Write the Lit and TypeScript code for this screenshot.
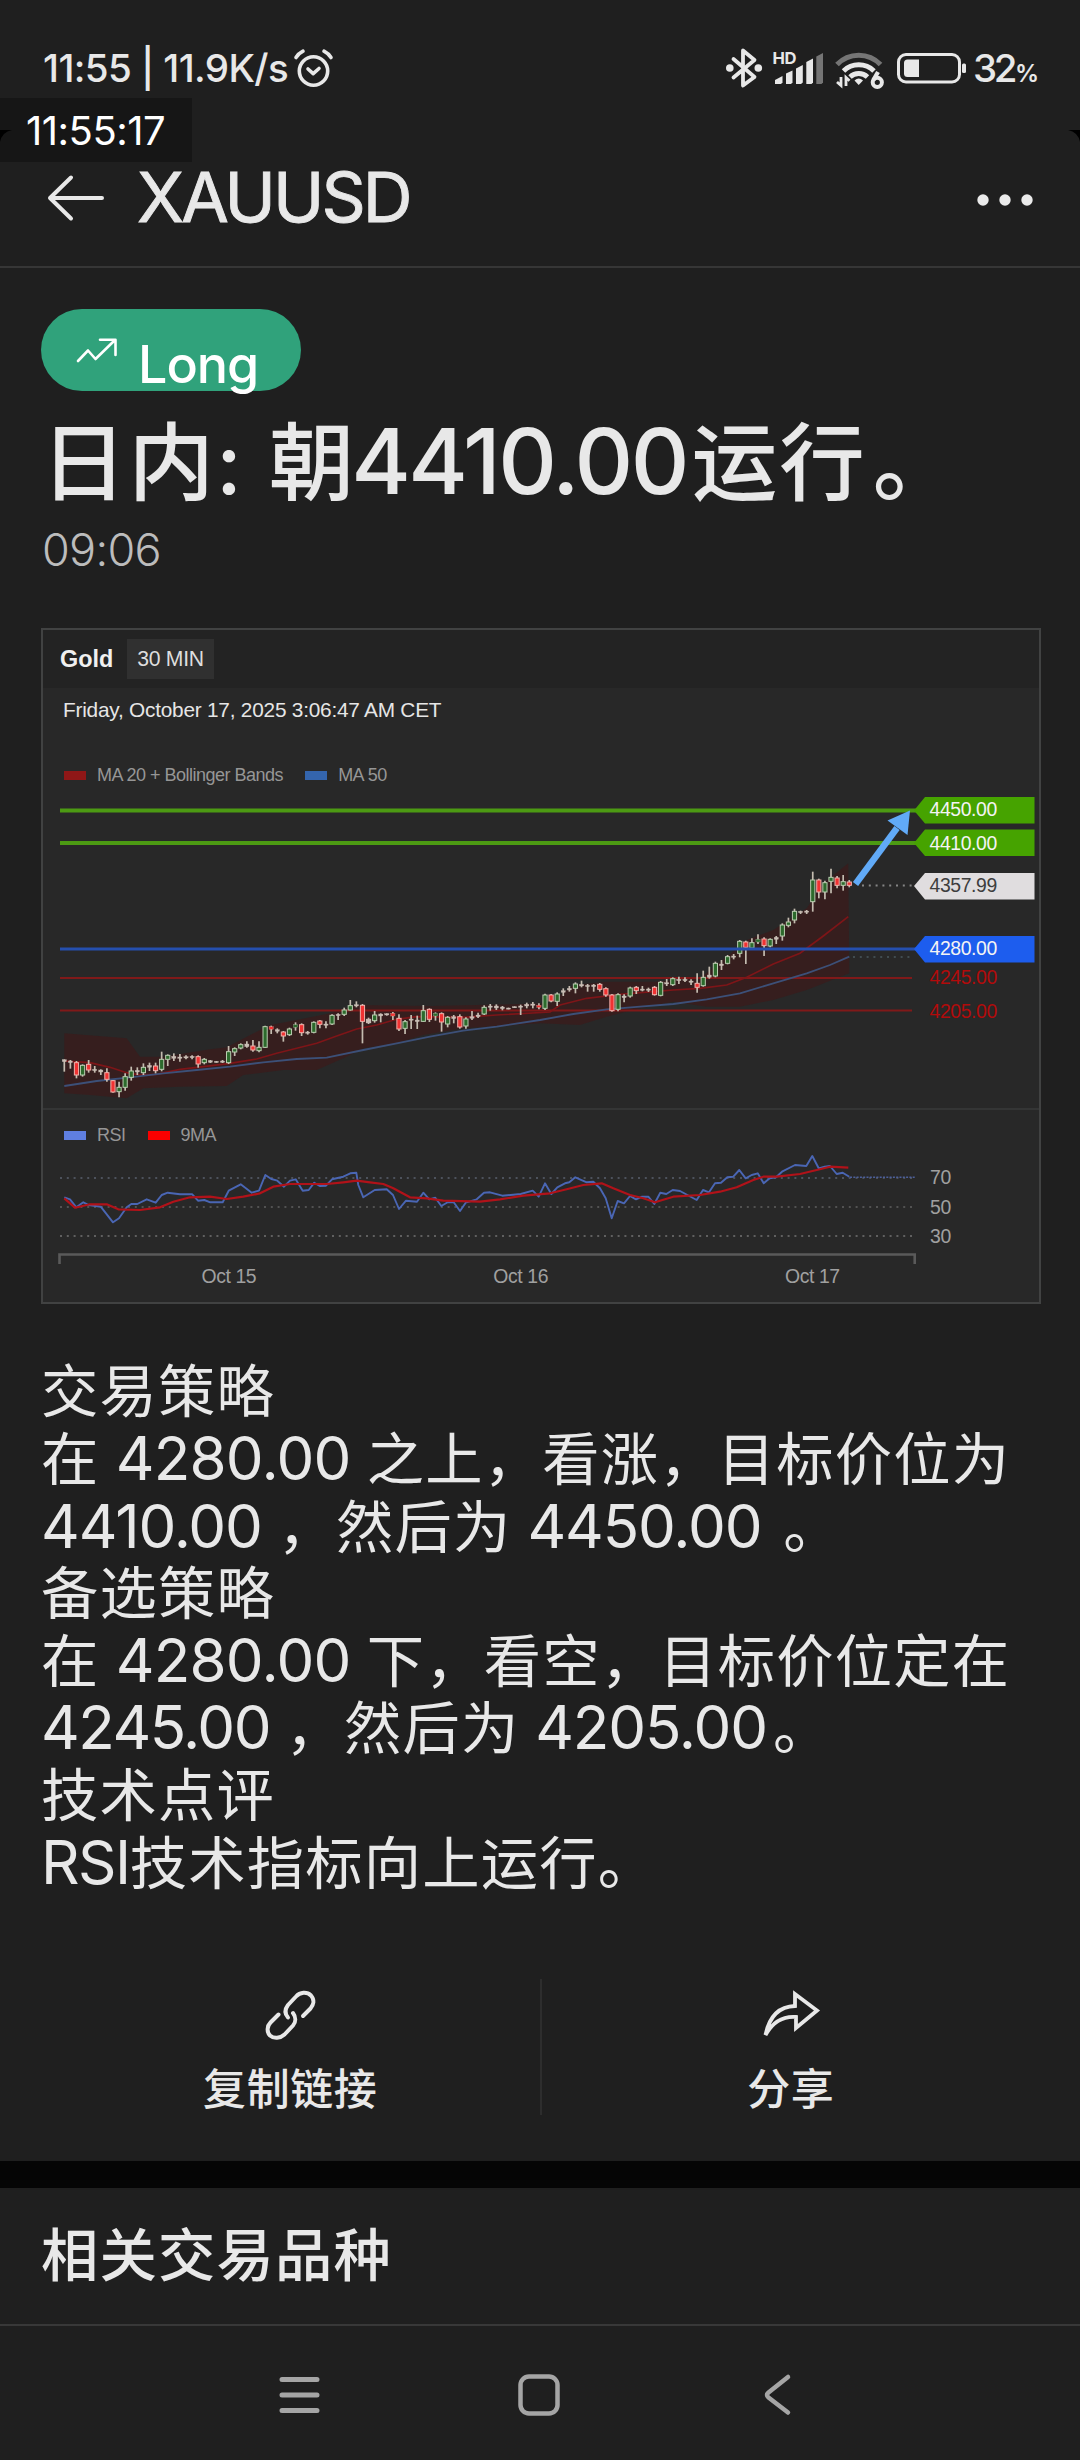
import { LitElement, html, svg, css } from "lit";
import { customElement } from "lit/decorators.js";

type Kind = "g" | "r" | "w";
type Candle = [number, number, number, number, Kind];

// high, body top, body bottom, low in thirds of a pixel below the plot origin
const CANDLES: Candle[] = [
  [298, 299, 305, 335, "w"], [300, 303, 308, 326, "w"], [303, 308, 345, 355, "r"], [313, 316, 345, 350, "g"],
  [300, 313, 330, 338, "r"], [318, 328, 332, 338, "w"], [328, 330, 336, 345, "w"], [325, 338, 358, 365, "r"],
  [360, 362, 396, 398, "r"], [365, 382, 395, 412, "g"], [340, 350, 382, 392, "g"], [320, 333, 352, 362, "g"],
  [322, 331, 336, 345, "w"], [310, 322, 338, 345, "g"], [308, 316, 322, 333, "w"], [308, 318, 332, 340, "r"],
  [275, 298, 328, 334, "g"], [283, 286, 298, 318, "g"], [280, 289, 295, 303, "w"], [282, 291, 295, 305, "w"],
  [286, 290, 294, 298, "w"], [286, 289, 293, 298, "w"], [286, 290, 312, 323, "r"], [294, 298, 308, 313, "g"],
  [300, 302, 307, 309, "w"], [303, 304, 307, 308, "w"], [300, 303, 307, 309, "w"], [258, 275, 308, 312, "g"],
  [262, 266, 276, 288, "g"], [250, 254, 264, 268, "g"], [244, 252, 260, 263, "w"], [240, 258, 270, 275, "r"],
  [244, 262, 272, 277, "g"], [197, 200, 262, 264, "g"], [197, 200, 208, 222, "r"], [205, 209, 214, 220, "w"],
  [213, 216, 228, 245, "r"], [203, 207, 224, 228, "g"], [187, 194, 202, 212, "g"], [190, 194, 218, 228, "r"],
  [213, 216, 220, 224, "w"], [184, 187, 217, 220, "g"], [180, 183, 193, 205, "r"], [184, 192, 196, 205, "w"],
  [163, 166, 192, 195, "g"], [160, 163, 167, 180, "w"], [143, 150, 163, 168, "g"], [120, 137, 150, 152, "g"],
  [124, 134, 138, 142, "w"], [132, 136, 184, 250, "r"], [173, 178, 188, 192, "w"], [153, 165, 182, 188, "g"],
  [160, 162, 168, 187, "w"], [160, 161, 165, 167, "w"], [156, 160, 168, 180, "r"], [163, 175, 207, 213, "r"],
  [180, 185, 205, 222, "g"], [165, 177, 181, 207, "w"], [167, 180, 185, 207, "w"], [135, 152, 184, 186, "g"],
  [145, 148, 178, 186, "r"], [157, 160, 168, 182, "g"], [157, 161, 186, 215, "r"], [168, 172, 192, 202, "g"],
  [165, 170, 176, 190, "w"], [163, 170, 201, 206, "r"], [172, 177, 198, 206, "g"], [153, 170, 175, 180, "w"],
  [158, 165, 170, 174, "w"], [136, 142, 162, 165, "g"], [132, 138, 142, 152, "w"], [133, 138, 144, 150, "w"],
  [138, 141, 146, 151, "w"], [143, 144, 147, 148, "w"], [139, 140, 143, 144, "w"], [134, 138, 142, 165, "w"],
  [128, 133, 138, 145, "w"], [126, 132, 136, 145, "w"], [130, 136, 142, 148, "r"], [101, 105, 145, 150, "g"],
  [102, 105, 123, 127, "r"], [97, 102, 124, 138, "g"], [85, 92, 97, 108, "w"], [78, 85, 90, 95, "w"],
  [67, 72, 85, 100, "g"], [62, 73, 78, 82, "w"], [72, 76, 80, 95, "w"], [72, 75, 80, 95, "w"],
  [69, 73, 88, 95, "r"], [82, 86, 105, 110, "r"], [102, 105, 152, 155, "r"], [100, 104, 148, 154, "g"],
  [103, 108, 113, 127, "w"], [80, 84, 108, 113, "g"], [78, 82, 92, 102, "r"], [78, 87, 91, 94, "w"],
  [83, 87, 91, 96, "w"], [78, 82, 104, 107, "r"], [63, 67, 106, 109, "g"], [57, 68, 72, 78, "w"],
  [52, 56, 74, 78, "g"], [50, 58, 62, 72, "w"], [52, 58, 62, 66, "w"], [58, 63, 67, 75, "w"],
  [40, 70, 82, 98, "r"], [32, 52, 77, 80, "g"], [20, 45, 52, 56, "w"], [5, 10, 48, 52, "g"],
  [0, 12, 17, 30, "w"], [-15, -10, 10, 13, "g"], [-18, -12, -8, -2, "w"], [-60, -56, -20, -8, "g"],
  [-58, -54, -38, 12, "r"], [-65, -52, -36, -32, "g"], [-77, -62, -54, -48, "g"], [-68, -63, -43, -12, "r"],
  [-65, -62, -42, -38, "g"], [-72, -68, -62, -48, "w"], [-110, -105, -72, -58, "g"], [-127, -114, -104, -98, "g"],
  [-154, -146, -120, -110, "g"], [-148, -146, -142, -138, "w"], [-150, -147, -143, -138, "w"], [-265, -240, -175, -145, "g"],
  [-244, -240, -204, -185, "r"], [-238, -232, -204, -182, "g"], [-274, -248, -236, -200, "g"], [-252, -246, -224, -215, "r"],
  [-255, -235, -224, -208, "g"], [-240, -234, -224, -218, "r"],
];

const px = (x: number) => 30 + x / 3;
const py = (y: number) => 960 + y / 3;
const line = (flat: number[], dx = 0, dy = 0) => {
  const out: string[] = [];
  for (let i = 0; i < flat.length; i += 2) {
    out.push(`${px(flat[i] + dx).toFixed(1)},${py(flat[i + 1] + dy).toFixed(1)}`);
  }
  return out.join(" ");
};

const MA20 =
  line([103, 303, 180, 308, 240, 322, 290, 338, 330, 345, 380, 343, 450, 328, 520, 320, 600, 310, 680, 297, 740, 280, 800, 265, 860, 250, 920, 228, 980, 207, 1040, 195, 1100, 178, 1160, 170, 1300, 172, 1400, 165, 1560, 156]) +
  " " +
  line([60, 795, 140, 775, 250, 762, 340, 755, 400, 750, 480, 745, 560, 735, 620, 712, 700, 672, 780, 640, 850, 588, 925, 530], 1530, -660);
const MA50 =
  line([103, 378, 200, 363, 300, 352, 400, 340, 500, 330, 600, 320, 700, 307, 800, 297, 890, 293, 1000, 270, 1100, 250, 1200, 230, 1300, 212, 1400, 200]) +
  " " +
  line([0, 840, 100, 822, 200, 808, 300, 800, 400, 792, 500, 778, 600, 760, 700, 730, 800, 700, 870, 675, 928, 650], 1530, -660);
const BAND =
  line([103, 220, 290, 235, 330, 290, 400, 290, 540, 268, 590, 262, 680, 215, 720, 195, 800, 180, 900, 160, 980, 135, 1200, 138, 1560, 130]) +
  " " +
  line([100, 735, 200, 725, 340, 725, 480, 715, 560, 650, 620, 600, 700, 570, 800, 505, 850, 430, 925, 370, 928, 700, 800, 750, 700, 780, 600, 800, 500, 800, 400, 785, 300, 805, 200, 830, 120, 855, 0, 850], 1530, -660) +
  " " +
  line([1300, 205, 1180, 225, 1100, 250, 1000, 265, 950, 290, 860, 330, 760, 330, 640, 345, 590, 378, 450, 380, 340, 385, 290, 415, 180, 405, 103, 400]);
const RSI =
  line([103, 712, 120, 718, 139, 742, 160, 727, 176, 735, 212, 740, 249, 787, 267, 775, 290, 742, 304, 732, 322, 732, 350, 718, 377, 728, 395, 705, 413, 698, 450, 703, 487, 703, 504, 722, 523, 720, 541, 727, 578, 727, 596, 692, 632, 673, 665, 698, 687, 692, 706, 645, 724, 657, 742, 662, 762, 680, 780, 662, 797, 658, 818, 692, 836, 690, 853, 668, 869, 678, 888, 677, 906, 658, 940, 650, 961, 640, 979, 638, 985, 675, 1000, 712, 1034, 690, 1070, 688, 1089, 705, 1107, 747, 1128, 722, 1161, 725, 1180, 698, 1198, 718, 1216, 713, 1234, 738, 1253, 727, 1271, 727, 1290, 753, 1307, 728, 1340, 718, 1362, 698, 1380, 697, 1417, 707, 1472, 702, 1508, 692, 1526, 710]) +
  " " +
  line([15, 430, 34, 462, 52, 442, 75, 430, 88, 427, 106, 412, 140, 427, 160, 425, 180, 445, 197, 475, 215, 535, 233, 483, 252, 490, 270, 468, 288, 478, 306, 470, 325, 470, 343, 492, 361, 458, 379, 462, 398, 450, 420, 453, 470, 480, 489, 450, 507, 457, 525, 430, 543, 428, 562, 412, 580, 410, 598, 390, 617, 415, 635, 405, 653, 400, 671, 430, 689, 415, 708, 412, 726, 395, 765, 375, 799, 378, 817, 348, 836, 385, 854, 380, 870, 378, 890, 402, 908, 398, 928, 410], 1530, 240);
const RSI_MA =
  line([103, 715, 135, 743, 180, 733, 230, 733, 265, 748, 330, 750, 390, 742, 430, 725, 480, 712, 540, 710, 590, 717, 640, 710, 690, 700, 730, 680, 780, 672, 850, 672, 890, 672, 940, 667, 980, 662, 1020, 667, 1060, 672, 1090, 685, 1140, 712, 1190, 715, 1240, 722, 1350, 725, 1410, 718, 1480, 707]) +
  " " +
  line([30, 460, 80, 448, 130, 435, 185, 430, 220, 445, 270, 465, 310, 475, 345, 487, 400, 470, 480, 465, 540, 455, 590, 442, 640, 420, 670, 410, 710, 410, 780, 402, 830, 390, 870, 380, 925, 383], 1530, 240);

@customElement("price-chart")
export class PriceChart extends LitElement {
  static styles = css`
    :host {
      display: flex;
      flex-direction: column;
      box-sizing: border-box;
      width: 1000px;
      height: 676px;
      border: 2px solid #414242;
      background: #282828;
      color: #e6e6e6;
      font-family: "Liberation Sans", sans-serif;
      overflow: hidden;
    }
    .head {
      display: flex;
      align-items: center;
      gap: 14px;
      height: 58px;
      padding-left: 17px;
      background: #232323;
      flex: none;
    }
    .name { font-size: 23.4px; font-weight: 700; color: #f0f0f0; }
    .frame {
      display: flex;
      align-items: center;
      height: 40px;
      padding: 0 10px;
      background: #303030;
      font-size: 21.2px;
      letter-spacing: -0.3px;
      line-height: 36px;
      color: #dedede;
    }
    .date { flex: none; padding: 10px 0 0 20px; font-size: 20.8px; letter-spacing: -0.22px; line-height: 24px; }
    .legend {
      display: flex;
      align-items: center;
      flex: none;
      padding-left: 21px;
      font-size: 18px;
      letter-spacing: -0.5px;
      line-height: 20px;
      color: #969696;
    }
    .main { padding-top: 43px; }
    .swatch { width: 22px; height: 9px; margin-right: 11px; }
    .item { margin-right: 22px; }
    .s1 { background: #8f1717; }
    .s2 { background: #3465ad; }
    .s3 { background: #5f7fe0; }
    .s4 { background: #fa0000; }
    svg { display: block; flex: none; }
    .rsi { margin-top: -4px; }
    text { font-size: 19.4px; letter-spacing: -0.4px; }
    .ax { fill: #a0a0a0; }
    .w { fill: #f4f4f4; }
    .d { fill: #3e3e3e; }
    .r { fill: #b10b0b; }
  `;

  private candle([hi, top, bottom, lo, kind]: Candle, i: number) {
    const x = 64.3 + i * 6.085;
    const edge = kind === "g" ? "#b9cdb0" : kind === "r" ? "#f0b0aa" : "#c9beb5";
    const fill = kind === "g" ? "#2c6a2c" : kind === "r" ? "#f03232" : "#c9beb5";
    const h = (bottom - top) / 3;
    const small = h < 3;
    return svg`
      <line x1=${x} x2=${x} y1=${py(hi)} y2=${py(lo)} stroke="#c4bcb0" stroke-width="1.7"></line>
      <rect x=${x - 2.1} y=${py(top)} width="4.2" height=${Math.max(h, 1.2)}
        fill=${fill} stroke=${edge} stroke-width=${small ? 0.3 : 1}></rect>`;
  }

  private tag(y: number, top: number, color: string, cls: string, text: string, base: number) {
    return svg`
      <path d="M914,${y} L925,${top} H1034.5 V${top + 26.5} H925Z" fill=${color}></path>
      <text class=${cls} x="929.5" y=${base}>${text}</text>`;
  }

  render() {
    const guide = (y: number, x1: number, x2: number, c: string) =>
      svg`<line x1=${x1} x2=${x2} y1=${y} y2=${y} stroke=${c} stroke-width="2" stroke-dasharray="2 4.8"></line>`;
    return html`
      <div class="head"><span class="name">Gold</span><span class="frame">30 MIN</span></div>
      <div class="date">Friday, October 17, 2025 3:06:47 AM CET</div>
      <div class="legend main">
        <span class="swatch s1"></span><span class="item">MA 20 + Bollinger Bands</span>
        <span class="swatch s2"></span><span class="item">MA 50</span>
      </div>
      <svg width="996" height="320" viewBox="43 785 996 320">
        <polygon points=${BAND} fill="#500f0f" fill-opacity=".36"></polygon>
        <g stroke="#4c9a13" stroke-width="4">
          <line x1="60" x2="918" y1="810.5" y2="810.5"></line>
          <line x1="60" x2="918" y1="843" y2="843"></line>
        </g>
        <g stroke="#801919" stroke-width="2.2">
          <line x1="60" x2="912" y1="978" y2="978"></line>
          <line x1="60" x2="912" y1="1010.5" y2="1010.5"></line>
        </g>
        ${guide(957, 853, 914, "#414c50")} ${guide(885.5, 862, 914, "#858585")}
        <polyline points=${MA20} fill="none" stroke="#7e1518" stroke-width="1.7"></polyline>
        <polyline points=${MA50} fill="none" stroke="#3c5078" stroke-width="1.8"></polyline>
        ${CANDLES.map((c, i) => this.candle(c, i))}
        <line x1="60" x2="918" y1="949" y2="949" stroke="#254fae" stroke-width="3"></line>
        <line x1="855.5" y1="884" x2="897" y2="828" stroke="#61aaf7" stroke-width="6.5"></line>
        <path d="M910,810.5 L887.5,820.5 L907.5,835Z" fill="#61aaf7"></path>
        ${this.tag(810.5, 797, "#46a300", "w", "4450.00", 816)}
        ${this.tag(843, 829.5, "#46a300", "w", "4410.00", 850)}
        ${this.tag(886, 873, "#e0dddf", "d", "4357.99", 892)}
        ${this.tag(949, 936, "#1d5dee", "w", "4280.00", 955)}
        <text class="r" x="929.5" y="983.5">4245.00</text>
        <text class="r" x="929.5" y="1017.5">4205.00</text>
      </svg>
      <svg width="996" height="20" viewBox="43 1105 996 20">
        <line x1="43" x2="1039" y1="1109" y2="1109" stroke="#343535" stroke-width="2"></line>
      </svg>
      <div class="legend">
        <span class="swatch s3"></span><span class="item">RSI</span>
        <span class="swatch s4"></span><span class="item">9MA</span>
      </div>
      <svg class="rsi" width="996" height="160" viewBox="43 1141 996 160">
        ${guide(1178, 60, 915, "#4d525c")} ${guide(1207, 60, 915, "#525252")} ${guide(1236, 60, 915, "#606060")}
        <line x1="850" x2="915" y1="1177.3" y2="1177.3" stroke="#4c5f9a" stroke-width="1.6" stroke-dasharray="2 1.3"></line>
        <polyline points=${RSI} fill="none" stroke="#4a66b4" stroke-width="1.9" stroke-linejoin="round"></polyline>
        <polyline points=${RSI_MA} fill="none" stroke="#b11219" stroke-width="2.2" stroke-linejoin="round"></polyline>
        <path d="M59.5,1264 V1254.5 H914.7 V1264" fill="none" stroke="#5a5a5a" stroke-width="2.6"></path>
        <text class="ax" x="930" y="1183.5">70</text>
        <text class="ax" x="930" y="1213.5">50</text>
        <text class="ax" x="930" y="1242.5">30</text>
        <text class="ax" x="201.5" y="1283">Oct 15</text>
        <text class="ax" x="493.3" y="1283">Oct 16</text>
        <text class="ax" x="785" y="1283">Oct 17</text>
      </svg>
    `;
  }
}

@customElement("app-root")
export class AppRoot extends LitElement {
  static styles = css`
    :host {
      display: flex;
      flex-direction: column;
      position: relative;
      width: 1080px;
      height: 2460px;
      overflow: hidden;
      background: #1f1f1f;
      color: #e8e8e8;
      font-family: Inter, "Noto Sans CJK SC", sans-serif;
    }
    * { box-sizing: border-box; }
    svg { display: block; flex: none; }
    .status { display: flex; height: 130px; padding: 40px 34px 0 43px; align-items: flex-start; flex: none; }
    .left { font-size: 38.5px; line-height: 56px; font-weight: 500; letter-spacing: -0.6px; white-space: pre; }
    .alarm { margin: 8px 0 0 5px; }
    .icons { margin-left: auto; }
    .level { display: flex; align-items: baseline; width: 78px; line-height: 56px; padding-left: 5px; }
    .pct { font-size: 38.5px; font-weight: 500; letter-spacing: -3.5px; margin-right: 1px; }
    .sign { font-size: 24px; font-weight: 600; }
    .clock {
      position: absolute;
      left: 0;
      top: 98px;
      width: 192px;
      height: 64px;
      padding-left: 26px;
      background: #161616;
      color: #fff;
      font-size: 40px;
      line-height: 66px;
      letter-spacing: -0.5px;
    }
    .corner { position: absolute; top: 130px; }
    .c1 { left: 0; }
    .c2 { right: 0; }
    .bar { display: flex; height: 138px; flex: none; padding: 43px 44px 0 46px; border-bottom: 2px solid #363636; }
    .title { margin: -15px 0 0 31px; font-size: 69px; line-height: 78px; letter-spacing: -2.9px; -webkit-text-stroke: 0.9px #e8e8e8; }
    .more { margin: 19px 0 0 auto; }
    .post { display: flex; flex-direction: column; padding: 41px 40px 0 41px; flex: none; height: 1893px; }
    .pill {
      display: flex;
      width: 260px;
      height: 82px;
      border-radius: 41px;
      background: #30a27b;
      color: #fff;
      flex: none;
    }
    .trend { margin: 27px 0 0 34px; }
    .long { margin: 24px 0 0 19px; font-size: 52px; line-height: 64px; font-weight: 500; letter-spacing: -1px; }
    h1 { display: flex; align-items: baseline; height: 130px; margin: 0; font-weight: 500; font-size: 85.5px; letter-spacing: 2px; line-height: 140px; white-space: pre; flex: none; }
    h1 .num { font-size: 91px; letter-spacing: -2.6px; margin: 0 5px 0 -5px; }
    .time { height: 52px; font-size: 45px; line-height: 58px; font-weight: 300; color: #bcbcbc; padding-left: 1px; flex: none; letter-spacing: -0.7px; }
    price-chart { margin: 55px 0 54px; flex: none; }
    .line { display: flex; align-items: baseline; height: 67.25px; font-size: 57.3px; letter-spacing: 1.2px; line-height: 67.25px; white-space: pre; flex: none; }
    .num { font-size: 60px; letter-spacing: -1.1px; }
    .wide { letter-spacing: -0.75px; }
    .tight { letter-spacing: -1.5px; }
    .stop { margin-left: 6px; }
    .actions { display: flex; margin-top: 83px; }
    .action { display: flex; flex: 1; flex-direction: column; align-items: center; font-size: 43px; letter-spacing: 0.6px; line-height: 60px; font-weight: 500; }
    .action svg { margin: -4px 0 4px 0; }
    .share { position: relative; left: -1px; }
    .rule { width: 2px; height: 136px; background: #2d2d2d; }
    .gap { height: 27px; background: #050505; flex: none; }
    .related { display: flex; align-items: center; height: 138px; padding: 0 41px 10px; border-bottom: 2px solid #383838; font-size: 57.3px; letter-spacing: 1.2px; font-weight: 500; flex: none; }
    .nav { display: flex; flex: none; padding: 46px 0 0 276px; gap: 194px; }
  `;

  render() {
    const n = (t: string, c = "") => html`<span class="num ${c}">${t}</span>`;
    return html`
      <div class="status">
        <span class="left">11:55 | 11.9K/s</span>
        <svg class="alarm" width="41" height="40" viewBox="0 0 40 40" fill="none" stroke="#e8e8e8" stroke-width="3.6" stroke-linecap="round" stroke-linejoin="round">
          <circle cx="20" cy="23" r="14.2"></circle>
          <path d="M14.5,21 L19.7,25.6 L25.5,20.5 M2.5,9.5 Q5,5.5 9.5,3.2 M30.5,3.2 Q35,5.5 37.5,9.5"></path>
        </svg>
        <svg class="icons" width="244" height="50" viewBox="724 40 244 50">
          <g fill="none" stroke="#e8e8e8" stroke-width="3.8" stroke-linejoin="round" stroke-linecap="round">
            <path d="M733.5,59 L754.5,77 L743,85.5 V50.5 L754.5,60 L733.5,77.5"></path>
          </g>
          <circle cx="729.8" cy="68" r="3.8" fill="#e8e8e8"></circle><circle cx="758.3" cy="68" r="3.8" fill="#e8e8e8"></circle>
          <text x="772.5" y="64.2" font-size="16.6" font-weight="700" fill="#e8e8e8" textLength="24">HD</text>
          <g fill="#e8e8e8">
            <path d="M775,84 V80 L782.5,76 V82.500 L781,84Z"></path>
            <path d="M786,84 V73.500 L792.5,70.500 V82.500 L791,84Z"></path>
            <path d="M796,84 V68.500 L802.8,65 V82.500 L801,84Z"></path>
            <path d="M806.300,84 V62 L813,58.500 V82.500 L811.5,84Z"></path>
            <path d="M816.300,84 V56.500 L823,53 V82.500 L821.5,84Z" fill="#757575"></path>
          </g>
          <g fill="none" stroke="#e8e8e8" stroke-width="5">
            <path d="M837,64.500 A30,30 0 0 1 880.500,64.500" stroke="#757575"></path>
            <path d="M843.500,71 A22,22 0 0 1 874,71"></path>
            <path d="M850,77 A13,13 0 0 1 867.500,77"></path>
          </g>
          <path d="M854.5,80.500 Q858.700,76.500 863,80.500 L858.700,85Z" fill="#e8e8e8"></path>
          <path d="M841,77 V85.500 L837,82 M846,86 V77.500 L849.500,80.800" fill="none" stroke="#e8e8e8" stroke-width="2.800"></path>
          <circle cx="877.3" cy="82.300" r="4.600" fill="#1f1f1f" stroke="#e8e8e8" stroke-width="4"></circle>
          <path d="M873.4,80 L878,72" stroke="#e8e8e8" stroke-width="4.2"></path>
          <rect x="898.5" y="54.500" width="61" height="27.500" rx="7.5" fill="none" stroke="#e8e8e8" stroke-width="3"></rect>
          <path d="M907.500,59.500 H919 V77 H907.500 Q904,77 904,73.500 V63 Q904,59.500 907.500,59.500Z" fill="#e8e8e8"></path>
          <rect x="962" y="63.500" width="4" height="9.500" rx="1.500" fill="#e8e8e8"></rect>
        </svg>
        <div class="level"><span class="pct">32</span><span class="sign">%</span></div>
      </div>
      <div class="clock">11:55:17</div>
      <svg class="corner c1" width="12" height="12"><path d="M0,0 H12 Q2,2 0,12Z" fill="#000"></path></svg>
      <svg class="corner c2" width="12" height="12"><path d="M12,0 H0 Q10,2 12,12Z" fill="#000"></path></svg>

      <div class="bar">
        <svg width="60" height="50" viewBox="46 173 60 50" fill="none" stroke="#e8e8e8" stroke-width="4" stroke-linecap="round" stroke-linejoin="round">
          <path d="M102,198 H50 M71,177.500 L50,198 L71,218.500"></path>
        </svg>
        <span class="title">XAUUSD</span>
        <svg class="more" width="60" height="16" viewBox="976 192 60 16" fill="#ebebeb">
          <circle cx="983" cy="200" r="5.700"></circle><circle cx="1005" cy="200" r="5.700"></circle><circle cx="1027" cy="200" r="5.700"></circle>
        </svg>
      </div>

      <div class="post">
        <div class="pill">
          <svg class="trend" width="44" height="28" viewBox="75 336 44 28" fill="none" stroke="#fff" stroke-width="2.600" stroke-linecap="round" stroke-linejoin="round">
            <path d="M78,361 L88,350.500 L95.500,359 L115,340 M100,339.800 H115.500 V355"></path>
          </svg>
          <span class="long">Long</span>
        </div>
        <h1>日内: 朝${n("4410.00")}运行<span class="stop">。</span></h1>
        <div class="time">09:06</div>
        <price-chart></price-chart>
        <div class="line">交易策略</div>
        <div class="line">在${n(" 4280.00 ", "wide")}之上，看涨，目标价位为</div>
        <div class="line">${n("4410.00 ")}，然后为${n(" 4450.00 ")}<span class="stop">。</span></div>
        <div class="line">备选策略</div>
        <div class="line">在${n(" 4280.00 ", "wide")}下，看空，目标价位定在</div>
        <div class="line">${n("4245.00 ", "tight")}，然后为${n(" 4205.00")}<span class="stop">。</span></div>
        <div class="line">技术点评</div>
        <div class="line">${n("RSI", "tight")}技术指标向上运行。</div>
        <div class="actions">
          <div class="action">
            <svg width="80" height="80" viewBox="0 0 80 80" fill="none" stroke="#e8e8e8" stroke-width="4" stroke-linecap="round" stroke-linejoin="round">
              <path d="M38,42.500 C34,38 35,34 38,30 L46,21.500 C50,17 57,16.500 61,20.500 C65,25 63.500,30 60.500,33.500 L53,41"></path>
              <path d="M28.500,39.500 L20.500,47.500 C17,51 16.500,57 20,60.500 C24,64 30,63.500 34.500,59.500 L43,50.500 C46,47 46,42 43,38"></path>
            </svg>
            <span>复制链接</span>
          </div>
          <span class="rule"></span>
          <div class="action">
            <svg class="share" width="80" height="80" viewBox="0 0 80 80" fill="none" stroke="#e8e8e8" stroke-width="3.800">
              <path d="M15.500,60 C19,43 28,31.500 45,31 V19 L67,35.500 L46,53 V42 C33,41 23,46.500 15.500,60Z"></path>
            </svg>
            <span>分享</span>
          </div>
        </div>
      </div>
      <div class="gap"></div>
      <div class="related">相关交易品种</div>
      <div class="nav">
        <svg width="46" height="46" viewBox="277 2372 46 46" stroke="#a5a5a5" stroke-width="5" stroke-linecap="round">
          <path d="M283,2379.500 H318 M283,2395 H318 M283,2410.500 H318"></path>
        </svg>
        <svg width="46" height="46" viewBox="516 2372 46 46" fill="none" stroke="#a5a5a5" stroke-width="4.500">
          <rect x="520.500" y="2376.500" width="37" height="37" rx="8.500"></rect>
        </svg>
        <svg width="46" height="46" viewBox="757 2372 46 46" fill="none" stroke="#a5a5a5" stroke-width="4.500" stroke-linecap="round" stroke-linejoin="round">
          <path d="M789,2377 L769.500,2392.500 Q766.500,2395 769.500,2397.500 L789,2412.500"></path>
        </svg>
      </div>
    `;
  }
}
